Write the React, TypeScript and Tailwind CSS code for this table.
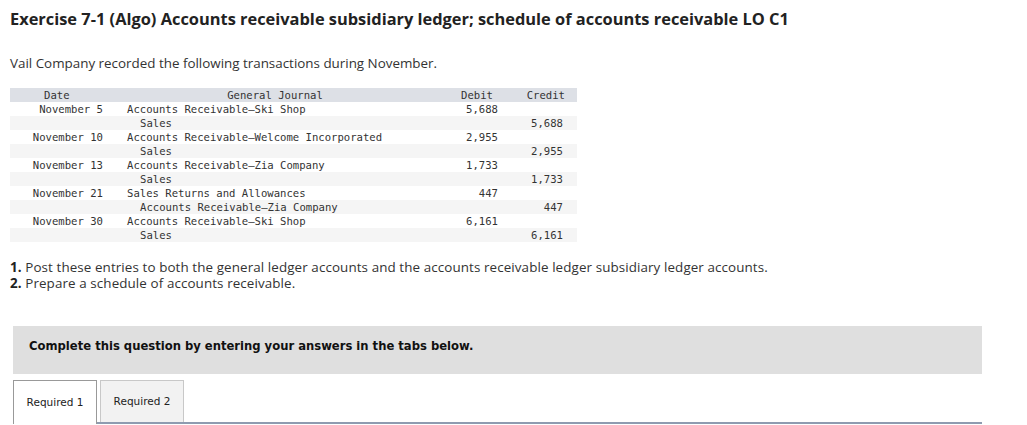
const rows = [
  { date: "November 5", text: "Accounts Receivable—Ski Shop", indent: false, debit: "5,688", credit: "" },
  { date: "", text: "Sales", indent: true, debit: "", credit: "5,688" },
  { date: "November 10", text: "Accounts Receivable—Welcome Incorporated", indent: false, debit: "2,955", credit: "" },
  { date: "", text: "Sales", indent: true, debit: "", credit: "2,955" },
  { date: "November 13", text: "Accounts Receivable—Zia Company", indent: false, debit: "1,733", credit: "" },
  { date: "", text: "Sales", indent: true, debit: "", credit: "1,733" },
  { date: "November 21", text: "Sales Returns and Allowances", indent: false, debit: "447", credit: "" },
  { date: "", text: "Accounts Receivable—Zia Company", indent: true, debit: "", credit: "447" },
  { date: "November 30", text: "Accounts Receivable—Ski Shop", indent: false, debit: "6,161", credit: "" },
  { date: "", text: "Sales", indent: true, debit: "", credit: "6,161" },
];

const sans = "font-['Open_Sans','Lato',sans-serif]";

export default function App() {
  return (
    <div className="min-h-[425px] w-[1027px] bg-white pl-[10px] text-[#222]">
      <h1 className={`${sans} pt-[9px] text-[16.4px] font-bold leading-[20px] text-[#222]`}>
        Exercise 7-1 (Algo) Accounts receivable subsidiary ledger; schedule of accounts receivable LO C1
      </h1>
      <p className={`${sans} mt-[25px] text-[13.4px] leading-[18px] text-[#333]`}>
        Vail Company recorded the following transactions during November.
      </p>

      <table className="mt-[16px] border-collapse font-['DejaVu_Sans_Mono',monospace] text-[10.6px] leading-[14px] text-[#333]">
        <thead>
          <tr className="h-[14px] bg-[#dde0e6]">
            <th className="w-[103px] p-0 pl-[34px] text-left font-normal">Date</th>
            <th className="w-[337px] p-0 pr-[13px] text-center font-normal">General Journal</th>
            <th className="w-[55px] p-0 pr-[12px] text-right font-normal">Debit</th>
            <th className="w-[72px] p-0 pr-[12px] text-right font-normal">Credit</th>
          </tr>
        </thead>
        <tbody>
          {rows.map((r, i) => (
            <tr key={i} className={i % 2 === 0 ? "h-[14px] bg-white" : "h-[14px] bg-[#f5f5f5]"}>
              <td className="p-0 pr-[10px] text-right whitespace-pre">{r.date}</td>
              <td className={r.indent ? "p-0 pl-[27px] whitespace-pre" : "p-0 pl-[14px] whitespace-pre"}>{r.text}</td>
              <td className="p-0 pr-[7px] text-right">{r.debit}</td>
              <td className="p-0 pr-[14px] text-right">{r.credit}</td>
            </tr>
          ))}
        </tbody>
      </table>

      <div className={`${sans} mt-[17px] text-[13.4px] leading-[16px] tracking-[0.1px] text-[#333]`}>
        <p>
          <b className="text-[#222]">1.</b> Post these entries to both the general ledger accounts and the accounts receivable ledger subsidiary ledger accounts.
        </p>
        <p>
          <b className="text-[#222]">2.</b> Prepare a schedule of accounts receivable.
        </p>
      </div>

      <div className="mt-[35px] w-[972px] pl-[3px]">
        <div className="h-[48px] bg-[#dfdfdf] pl-[16px] pt-[12px] font-['DejaVu_Sans',Verdana,sans-serif] text-[11.6px] leading-[16px] font-bold text-[#111]">
          Complete this question by entering your answers in the tabs below.
        </div>
        <div className="mt-[6px] flex gap-[3px] border-b-2 border-[#8e9bb0] font-['DejaVu_Sans',Verdana,sans-serif] text-[10.5px] text-[#222]">
          <div className="-mb-[2px] flex h-[44px] w-[84px] items-center justify-center border border-b-0 border-[#999] bg-white">
            Required 1
          </div>
          <div className="flex h-[42px] w-[84px] items-center justify-center border border-b-0 border-[#c8c8c8] bg-[#f2f2f2]">
            Required 2
          </div>
        </div>
      </div>
    </div>
  );
}
